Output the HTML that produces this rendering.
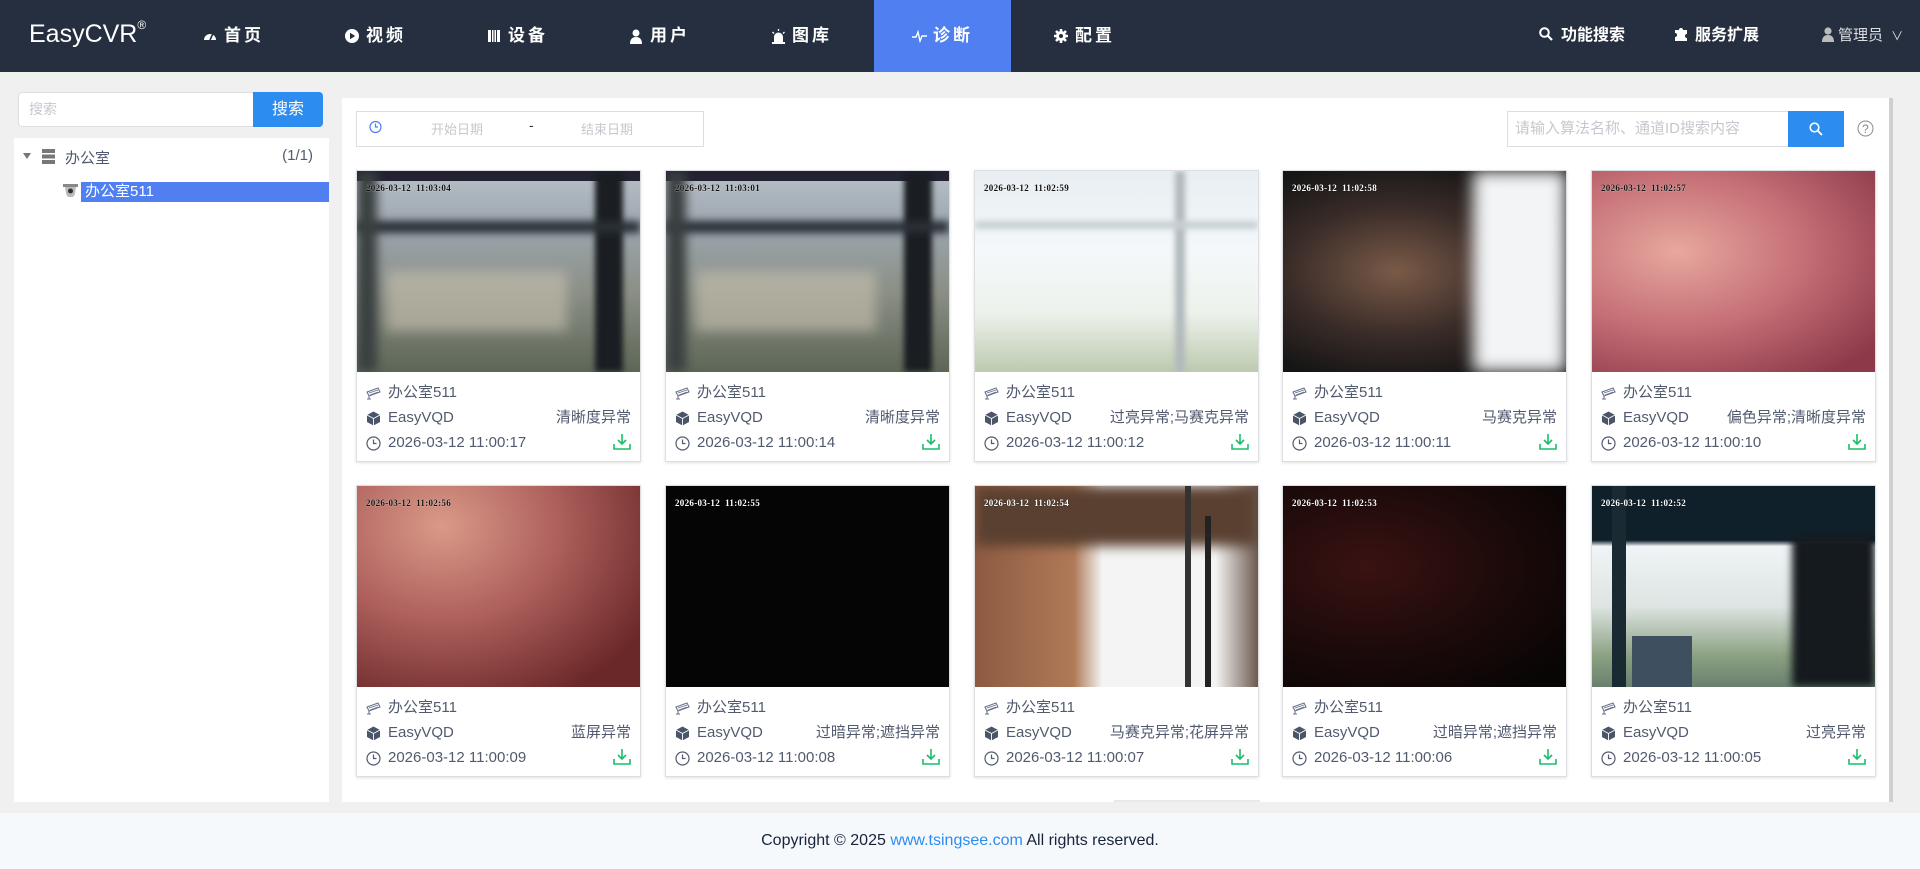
<!DOCTYPE html>
<html><head><meta charset="utf-8"><style>
*{margin:0;padding:0;box-sizing:border-box}
body{width:1920px;height:869px;overflow:hidden;background:#f0f0f0;font-family:"Liberation Sans","Noto Sans CJK SC",sans-serif;position:relative;color:#515a6e}
.hd{position:absolute;left:0;top:0;width:1920px;height:72px;background:#262f3f;color:#fff}
.logo{position:absolute;left:29px;top:20px;font-size:25px;color:#fff;letter-spacing:0px}
.logo sup{font-size:12px;position:relative;top:-4px}
.nav{position:absolute;top:0;height:72px;width:137px;line-height:72px;font-size:17px;font-weight:bold;color:#fff;padding-left:38px;letter-spacing:3px}
.nav.on{background:#4f7ff0}
.nav svg{position:absolute;left:38px;top:29px}
.nav span{margin-left:21px}
.rt{position:absolute;top:0;line-height:72px;font-size:16px;font-weight:bold;color:#fff}
.panel{position:absolute;background:#fff}
.sin{position:absolute;left:18px;top:92px;width:236px;height:35px;border:1px solid #dcdee2;background:#fff;font-size:14px;color:#c5c8ce;line-height:33px;padding-left:10px;border-radius:4px 0 0 4px}
.sbtn{position:absolute;left:253px;top:92px;width:70px;height:35px;background:#2d8cf0;color:#fff;font-size:16px;line-height:35px;text-align:center;border-radius:0 4px 4px 0}
.card{position:absolute;width:285px;height:292px;background:#fff;border:1px solid #dcdee2;box-shadow:0 1px 3px rgba(0,0,0,.12)}
.img{position:absolute;left:0;top:0;width:283px;height:201px;overflow:hidden}
.ts{position:absolute;left:9px;top:12px;font-family:"Liberation Serif",serif;font-size:9px;font-weight:bold;letter-spacing:.3px}
.ts.d{color:#111;text-shadow:0 0 1px #fff}
.ts.w{color:#fff;text-shadow:0 0 1px #000}
.ln{position:absolute;left:9px;right:9px;font-size:15px;color:#515a6e;height:20px;line-height:20px}
.ln>svg{position:absolute;left:0;top:3px}
.ln .t{position:absolute;left:22px}
.ln .r{position:absolute;right:0;top:0}
.ln .r svg{display:block;margin-top:0}
.foot{position:absolute;left:0;top:813px;width:1920px;height:56px;background:#f6f9fc;text-align:center;line-height:56px;font-size:16px;color:#17233d}
.foot a{color:#2d8cf0;text-decoration:none}
</style></head><body>
<div class="hd">
<div class="logo">EasyCVR<sup>®</sup></div>
<div class="nav" style="left:165px"><svg width="14" height="14" viewBox="0 0 14 14"><path d="M1 11a6 6 0 1 1 12 0z" fill="#fff"/><path d="M7 11L9.5 5.5" stroke="#262f3f" stroke-width="1.6"/></svg><span>首页</span></div>
<div class="nav" style="left:307px"><svg width="14" height="14" viewBox="0 0 14 14"><circle cx="7" cy="7" r="7" fill="#fff"/><path d="M5 3.8L10.2 7 5 10.2z" fill="#262f3f"/></svg><span>视频</span></div>
<div class="nav" style="left:449px"><svg width="14" height="14" viewBox="0 0 14 14"><rect x="1" y="1" width="12" height="12" fill="#fff"/><path d="M4.5 1v12M7 1v12M9.5 1v12" stroke="#262f3f" stroke-width="1"/></svg><span>设备</span></div>
<div class="nav" style="left:591px"><svg width="14" height="15" viewBox="0 0 14 15"><circle cx="7" cy="4" r="3.5" fill="#fff"/><path d="M1 15c0-5 2.5-7 6-7s6 2 6 7z" fill="#fff"/></svg><span>用户</span></div>
<div class="nav" style="left:733px"><svg width="15" height="15" viewBox="0 0 15 15"><path d="M3 14V8a4.5 4.5 0 0 1 9 0v6z" fill="#fff"/><rect x="1" y="13" width="13" height="2" fill="#fff"/><path d="M7.5 0v2M1.5 3l1.5 1.5M13.5 3L12 4.5" stroke="#fff" stroke-width="1.3"/></svg><span>图库</span></div>
<div class="nav on" style="left:874px"><svg width="15" height="14" viewBox="0 0 15 14"><path d="M0 8h4l2-5 2 9 2-5h5" stroke="#fff" stroke-width="1.4" fill="none"/></svg><span>诊断</span></div>
<div class="nav" style="left:1016px"><svg width="14" height="14" viewBox="0 0 14 14"><circle cx="7" cy="7" r="5" fill="#fff"/><path d="M7 0v14M0 7h14M2 2l10 10M12 2L2 12" stroke="#fff" stroke-width="2.6"/><circle cx="7" cy="7" r="2" fill="#262f3f"/></svg><span>配置</span></div>
<div class="rt" style="left:1539px"><svg width="14" height="14" viewBox="0 0 14 14" style="vertical-align:-1px;margin-right:8px"><circle cx="5.5" cy="5.5" r="4.3" stroke="#fff" stroke-width="2" fill="none"/><path d="M8.5 8.5L13 13" stroke="#fff" stroke-width="2.2"/></svg>功能搜索</div>
<div class="rt" style="left:1674px"><svg width="15" height="15" viewBox="0 0 15 15" style="vertical-align:-1px;margin-right:6px"><path d="M1 4h4a2 2 0 1 1 4 0h4v4a2 2 0 1 0 0 4v3H1v-4a2 2 0 1 0 0-4z" fill="#fff"/></svg>服务扩展</div>
<div class="rt" style="left:1822px;font-weight:normal;color:#dcdee2;font-size:15px"><svg width="12" height="15" viewBox="0 0 12 15" style="vertical-align:-2px;margin-right:4px"><circle cx="6" cy="4" r="3.6" fill="#bbb"/><path d="M0 15c0-5 2.5-7 6-7s6 2 6 7z" fill="#bbb"/></svg>管理员 <span style="font-size:12px;margin-left:4px">∨</span></div>
</div>

<div class="sin">搜索</div><div class="sbtn">搜索</div>
<div class="panel" style="left:14px;top:138px;width:315px;height:664px">
<div style="position:absolute;left:9px;top:15px;width:0;height:0;border-left:4px solid transparent;border-right:4px solid transparent;border-top:6px solid #777"></div>
<svg style="position:absolute;left:28px;top:11px" width="13" height="15" viewBox="0 0 13 15"><rect x="0" y="0" width="13" height="4" fill="#777"/><rect x="0" y="5.5" width="13" height="4" fill="#777"/><rect x="0" y="11" width="13" height="4" fill="#777"/></svg>
<div style="position:absolute;left:51px;top:9px;font-size:15px;color:#515a6e">办公室</div>
<div style="position:absolute;right:16px;top:9px;font-size:15px;color:#515a6e">(1/1)</div>
<svg style="position:absolute;left:49px;top:46px" width="15" height="13" viewBox="0 0 15 13"><path d="M0 0h15v3H0z" fill="#888"/><path d="M2 3h11l-1 6a4 4 0 0 1-9 0z" fill="#bbb"/><circle cx="7.5" cy="7" r="2.5" fill="#333"/></svg>
<div style="position:absolute;left:67px;top:44px;width:248px;height:20px;background:#4f7ff0;color:#fff;font-size:15px;line-height:20px;padding-left:4px">办公室511</div>
</div>

<div class="panel" style="left:342px;top:98px;width:1547px;height:704px">
<div style="position:absolute;left:14px;top:13px;width:348px;height:36px;border:1px solid #dcdee2">
<svg style="position:absolute;left:12px;top:8px" width="13" height="14" viewBox="0 0 13 14"><circle cx="6.5" cy="7" r="5.5" stroke="#4f7ff0" stroke-width="1.2" fill="none"/><path d="M6.5 3.5V7h2.5" stroke="#4f7ff0" stroke-width="1.2" fill="none"/></svg>
<span style="position:absolute;left:74px;top:7px;font-size:13px;color:#c5c8ce">开始日期</span>
<span style="position:absolute;left:172px;top:5px;font-size:14px;color:#333">-</span>
<span style="position:absolute;left:224px;top:7px;font-size:13px;color:#c5c8ce">结束日期</span>
</div>
<div style="position:absolute;left:1165px;top:13px;width:282px;height:36px;border:1px solid #dcdee2;font-size:15px;color:#c5c8ce;line-height:34px;padding-left:7px">请输入算法名称、通道ID搜索内容</div>
<div style="position:absolute;left:1446px;top:13px;width:56px;height:36px;background:#2d8cf0"><svg style="position:absolute;left:21px;top:11px" width="14" height="14" viewBox="0 0 14 14"><circle cx="5.5" cy="5.5" r="4.3" stroke="#fff" stroke-width="1.6" fill="none"/><path d="M8.5 8.5L13 13" stroke="#fff" stroke-width="1.8"/></svg></div>
<svg style="position:absolute;left:1515px;top:22px" width="17" height="17" viewBox="0 0 17 17"><circle cx="8.5" cy="8.5" r="7.5" stroke="#888" stroke-width="1" fill="none"/><text x="8.5" y="13" font-size="12" text-anchor="middle" fill="#888" font-family="Liberation Sans">?</text></svg>
<div style="position:absolute;left:1547px;top:0;width:4px;height:704px;background:#d0d0d0"></div>
<div style="position:absolute;left:772px;top:702px;width:146px;height:2px;background:#e8e8e8"></div>
</div>

<div id="cards"></div>
<script>
var xs=[356,665,974,1282,1591],ys=[170,485];
var data=[
["11:03:04","清晰度异常","11:00:17","linear-gradient(180deg,#b8c0c8 0%,#9aa4ab 30%,#8b8f86 60%,#5d6656 100%)",1,"d"],
["11:03:01","清晰度异常","11:00:14","linear-gradient(180deg,#b8c0c8 0%,#9aa4ab 30%,#8b8f86 60%,#5d6656 100%)",1,"d"],
["11:02:59","过亮异常;马赛克异常","11:00:12","linear-gradient(180deg,#e8eef2 0%,#f4f8fa 40%,#eef2ec 70%,#bccab0 100%)",2,"d"],
["11:02:58","马赛克异常","11:00:11","radial-gradient(ellipse at 40% 50%,#7a5a48 0%,#3a2c28 45%,#151515 80%),#111",3,"w"],
["11:02:57","偏色异常;清晰度异常","11:00:10","radial-gradient(ellipse at 30% 40%,#e7a89e 0%,#c56f76 45%,#8c3a4a 90%)",0,"d"],
["11:02:56","蓝屏异常","11:00:09","radial-gradient(ellipse at 30% 20%,#d99a88 0%,#b0625e 40%,#6a2828 85%)",0,"d"],
["11:02:55","过暗异常;遮挡异常","11:00:08","#050505",0,"w"],
["11:02:54","马赛克异常;花屏异常","11:00:07","linear-gradient(90deg,#8d5a42 0%,#b07a58 35%,#f4f4f4 45%,#f4f4f4 85%,#6d5a50 100%)",4,"w"],
["11:02:53","过暗异常;遮挡异常","11:00:06","radial-gradient(ellipse at 30% 40%,#3a1212 0%,#1c0a0a 50%,#080505 90%)",0,"w"],
["11:02:52","过亮异常","11:00:05","linear-gradient(180deg,#10202a 0%,#10202a 27%,#f0f4f6 30%,#dde4e2 60%,#8aa080 85%,#6a8070 100%)",5,"w"]];
var h="";
var cam='<svg width="16" height="14" viewBox="0 0 16 14"><path d="M1 6l11-4 2 4-11 4z" fill="none" stroke="#67718a" stroke-width="1.1"/><path d="M3 7l9-3M4 9l8-3" stroke="#67718a" stroke-width=".8"/><path d="M3 10v3M1 13h4" stroke="#67718a" stroke-width="1.1"/></svg>';
var box='<svg width="15" height="15" viewBox="0 0 15 15"><path d="M7.5 0.5L14 4v7l-6.5 3.5L1 11V4z" fill="#4b5568"/><path d="M1 4l6.5 3.5L14 4M7.5 7.5v7" stroke="#fff" stroke-width=".9" fill="none"/></svg>';
var clk='<svg width="15" height="15" viewBox="0 0 15 15"><circle cx="7.5" cy="7.5" r="6.5" stroke="#515a6e" stroke-width="1.2" fill="none"/><path d="M7.5 3.5v4h3" stroke="#515a6e" stroke-width="1.2" fill="none"/></svg>';
var dl='<svg width="18" height="17" viewBox="0 0 18 17"><path d="M9 1v10M5 7l4 4 4-4" stroke="#19be6b" stroke-width="1.6" fill="none"/><path d="M1 11v5h16v-5" stroke="#19be6b" stroke-width="1.6" fill="none"/></svg>';
for(var i=0;i<10;i++){var d=data[i],x=xs[i%5],y=ys[Math.floor(i/5)];
var ex="";
if(d[4]==1)ex='<div style="position:absolute;left:0;top:0;width:283px;height:10px;background:#223"></div><div style="position:absolute;left:238px;top:0;width:28px;height:201px;background:#1a1e22;filter:blur(3px)"></div><div style="position:absolute;left:0;top:50px;width:283px;height:12px;background:#2a3036;filter:blur(4px)"></div><div style="position:absolute;left:0;top:0;width:20px;height:201px;background:#3a4040;filter:blur(5px)"></div><div style="position:absolute;left:30px;top:100px;width:180px;height:60px;background:#c8c2b0;filter:blur(6px);opacity:.6"></div>';
if(d[4]==2)ex='<div style="position:absolute;left:200px;top:0;width:10px;height:201px;background:#b0b8bc;filter:blur(3px)"></div><div style="position:absolute;left:0;top:50px;width:283px;height:8px;background:#c8d0d4;filter:blur(3px)"></div>';
if(d[4]==3)ex='<div style="position:absolute;left:190px;top:0;width:93px;height:201px;background:#f2f4f6;filter:blur(8px)"></div>';
if(d[4]==4)ex='<div style="position:absolute;left:0;top:0;width:283px;height:60px;background:#5a4030;filter:blur(6px)"></div><div style="position:absolute;left:230px;top:30px;width:6px;height:171px;background:#222"></div><div style="position:absolute;left:210px;top:0;width:6px;height:201px;background:#333"></div>';
if(d[4]==5)ex='<div style="position:absolute;left:20px;top:0;width:14px;height:201px;background:#1a2a32"></div><div style="position:absolute;left:200px;top:50px;width:83px;height:151px;background:#151a1e;filter:blur(4px)"></div><div style="position:absolute;left:40px;top:150px;width:60px;height:51px;background:#3e5060"></div>';
h+='<div class="card" style="left:'+x+'px;top:'+y+'px"><div class="img" style="background:'+d[3]+'">'+ex+'<div class="ts '+d[5]+'">2026-03-12&nbsp;&nbsp;'+d[0]+'</div></div>'+
'<div class="ln" style="top:212px">'+cam+'<span class="t">办公室511</span></div>'+
'<div class="ln" style="top:237px">'+box+'<span class="t">EasyVQD</span><span class="r">'+d[1]+'</span></div>'+
'<div class="ln" style="top:262px">'+clk+'<span class="t">2026-03-12 '+d[2]+'</span><span class="r">'+dl+'</span></div></div>';}
document.getElementById("cards").innerHTML=h;
</script>
<div class="foot">Copyright © 2025 <a>www.tsingsee.com</a> All rights reserved.</div>
</body></html>
